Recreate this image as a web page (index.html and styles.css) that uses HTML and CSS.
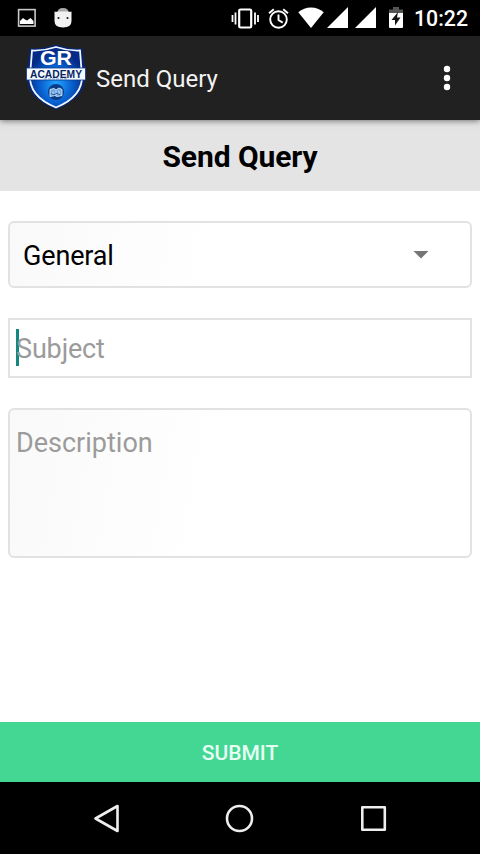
FILE: index.html
```html
<!DOCTYPE html>
<html lang="en">
<head>
<meta charset="utf-8">
<title>Send Query</title>
<link rel="stylesheet" href="styles.css">
</head>
<body>
<div class="screen">
  <div class="status">
    <div class="status-left">
      <svg width="20" height="20" viewBox="0 0 20 20"><rect x="1.600" y="1.600" width="16.500" height="16.500" fill="none" stroke="#c9c9c9" stroke-width="1.6"/><path d="M3 16v-3l3-3 2 1.5 2 1 3.500-2.500 3 3v3z" fill="#fff"/></svg>
      <svg width="20" height="22" viewBox="0 0 20 22"><path d="M4.500 5.500Q4.500 1 10 1T15.500 5.500z" fill="#aaa"/><path d="M1.500 4.500Q3 5 5 4.500h10q2 .5 3.500 0V14q0 6.500-8.500 6.500T1.500 14z" fill="#f2f2f2"/><circle cx="5.500" cy="11" r="1.100" fill="#222"/><circle cx="14.500" cy="11" r="1.100" fill="#222"/></svg>
    </div>
    <div class="status-right">
      <svg width="28" height="22" viewBox="0 0 28 22"><path d="M1.500 8v7M4.500 5.500v12M24 5.500v12M27 8v7" stroke="#fff" stroke-width="1.800"/><rect x="8.200" y="2.500" width="12" height="18" rx="1.300" fill="none" stroke="#fff" stroke-width="2.200"/></svg>
      <svg class="alarm" width="22" height="22" viewBox="0 0 22 22" fill="none" stroke="#fff" stroke-width="1.900"><circle cx="11.500" cy="12.500" r="8.300"/><path d="M2 6.200L6.800 2.200M21 6.200l-4.800-4M11.500 7.500V13l4.200 2.600"/></svg>
      <svg class="wifi" width="26" height="22" viewBox="0 0 26 22"><path d="M.3 5.300Q5.800 .5 13 .5t12.700 4.800L13 21z" fill="#fff"/></svg>
      <svg class="signal" width="21" height="22" viewBox="0 0 21 22"><path d="M21 0v21H0z" fill="#fff"/></svg>
      <svg class="signal-two" width="21" height="22" viewBox="0 0 21 22"><path d="M21 0v21H0z" fill="#fff"/></svg>
      <svg class="battery" width="14" height="22" viewBox="0 0 14 22"><path d="M0 2.500h4V0h6v2.500h4V7H0z" fill="#555"/><path d="M0 6h14v14q0 1-1 1H1q-1 0-1-1z" fill="#fff"/><path d="M9 5L2.500 13H6v5.500L11.500 10.500H8z" fill="#111"/></svg>
      <span class="clock">10:22</span>
    </div>
  </div>
  <header class="appbar">
    <svg class="logo" width="62" height="66" viewBox="0 0 62 66">
      <defs><radialGradient id="g" cx="50%" cy="62%" r="55%"><stop offset="0" stop-color="#24a5ff"/><stop offset=".55" stop-color="#0860cf"/><stop offset="1" stop-color="#062a86"/></radialGradient></defs>
      <path d="M31 .5Q44 5 57.500 4.500Q58 15 60 22v14C59 50 47 59 31 65.500 15 59 3 50 2 36V22Q4 15 4.500 4.500 18 5 31 .5z" fill="#07256f"/>
      <path d="M31 3Q43 7 55 6.500q1 14 2 24C58 46 47 57 31 63.500 15 57 4 46 5 30.500q1-10 2-24Q19 7 31 3z" fill="url(#g)" stroke="#eef6ff" stroke-width="1.800"/>
      <path d="M1.500 24h59v12H1.500z" fill="#f5fbff" stroke="#0b3c91" stroke-width=".8"/>
      <text class="logo-gr" x="31" y="20.500" text-anchor="middle" textLength="32" lengthAdjust="spacingAndGlyphs">GR</text>
      <text class="logo-name" x="31" y="33.500" text-anchor="middle" textLength="52" lengthAdjust="spacingAndGlyphs">ACADEMY</text>
      <path d="M19 35h24" stroke="#567db5" stroke-width=".8" stroke-dasharray="3 1"/>
      <circle cx="31" cy="48" r="8" fill="#0b3a87"/>
      <path d="M25 45.500l4-1 2 1.500 3-2 3 1.500v6l-5 1-2-1-5 1zM28 47.500v3m3-4v5m3-5v4" fill="#6ba5e0" stroke="#d5eaff" stroke-width=".9"/><path d="M26 49.500l3 1.500 3-2 3 2" fill="none" stroke="#163c7c" stroke-width=".8"/>
    </svg>
    <h1 class="title">Send Query</h1>
    <svg class="more" width="8" height="26" viewBox="0 0 8 26" fill="#fff"><circle cx="4" cy="4" r="3.200"/><circle cx="4" cy="13" r="3.200"/><circle cx="4" cy="22" r="3.200"/></svg>
  </header>
  <h2 class="heading">Send Query</h2>
  <main class="form">
    <div class="field select"><span class="value">General</span><svg width="16" height="8" viewBox="0 0 16 8"><path d="M.5 0h15L8 7.500z" fill="#757575"/></svg></div>
    <div class="field subject"><span class="caret"></span><span class="hint">Subject</span></div>
    <div class="field description">Description</div>
  </main>
  <div class="submit">SUBMIT</div>
  <nav class="nav">
    <svg width="28" height="30" viewBox="0 0 28 30"><path d="M25.500 2v25L3.500 14.500z"/></svg>
    <svg width="30" height="30" viewBox="0 0 30 30"><circle cx="14.500" cy="14.500" r="12.500"/></svg>
    <svg width="28" height="30" viewBox="0 0 28 30"><rect x="3.300" y="3.300" width="22.500" height="22.500"/></svg>
  </nav>
</div>
</body>
</html>
```
FILE: styles.css
```css
* { box-sizing: border-box; }
body { margin: 0; background: #fff; font-family: Roboto, sans-serif; }
svg { display: block; flex: none; }
.screen { width: 480px; height: 854px; display: flex; flex-direction: column; overflow: hidden; }
.status { height: 36px; background: #000; display: flex; justify-content: space-between; align-items: center; padding: 0 12px 0 17px; }
.status-left { display: flex; align-items: center; gap: 16px; }
.status-right { display: flex; align-items: center; }
.alarm { margin-left: 8px; }
.wifi { margin-left: 9px; }
.signal { margin-left: 3px; }
.signal-two { margin-left: 7px; }
.battery { margin-left: 13px; }
.clock { margin-left: 11px; width: 54px; color: #fff; font-size: 21.3px; font-weight: 500; line-height: 36px; padding-top: 2px; white-space: nowrap; }
.appbar { height: 84px; background: #212121; display: flex; align-items: center; padding: 0 29px 0 25px; box-shadow: 0 1px 6px rgba(0,0,0,.5); z-index: 1; }
.logo { margin-top: -2px; }
.logo-gr { font: bold 20px "Liberation Sans", sans-serif; fill: #fff; }
.logo-name { font: bold 10px "Liberation Sans", sans-serif; fill: #082462; }
.title { margin: 2px auto 0 9px; color: #f3f3f3; font-size: 24px; font-weight: 400; }
.heading { margin: 0; height: 71px; background: #e4e4e4; color: #000; text-align: center; font-size: 30px; letter-spacing: -.08px; line-height: 73px; font-weight: 700; }
.form { flex: 1; padding: 30px 8px 0; display: flex; flex-direction: column; gap: 30px; font-size: 27px; }
.field { border: 2px solid #e2e2e2; border-radius: 6px; background: linear-gradient(100deg, #f9f9f9, #fff 45%); }
.select { height: 67px; display: flex; align-items: center; justify-content: space-between; padding: 1px 41px 0 13px; color: #000; letter-spacing: -.15px; }
.value { padding-top: 2px; }
.subject { height: 60px; border-radius: 0; background: #fff; display: flex; align-items: center; padding-left: 6px; color: #9b9b9b; letter-spacing: -.15px; }
.caret { width: 3px; height: 37px; margin: 0 -3px 2px 0; background: #16877e; }
.hint { padding-top: 2px; }
.description { height: 150px; padding: 17px 6px; line-height: 32px; color: #9b9b9b; }
.submit { height: 60px; background: #43d793; color: #e8fff4; text-align: center; font-size: 21px; line-height: 63px; font-weight: 500; }
.nav { height: 72px; background: #000; display: flex; justify-content: space-between; align-items: center; padding: 1px 93px 0 92px; }
.nav svg { fill: none; stroke: #eee; stroke-width: 2.6; stroke-linejoin: round; }
```
